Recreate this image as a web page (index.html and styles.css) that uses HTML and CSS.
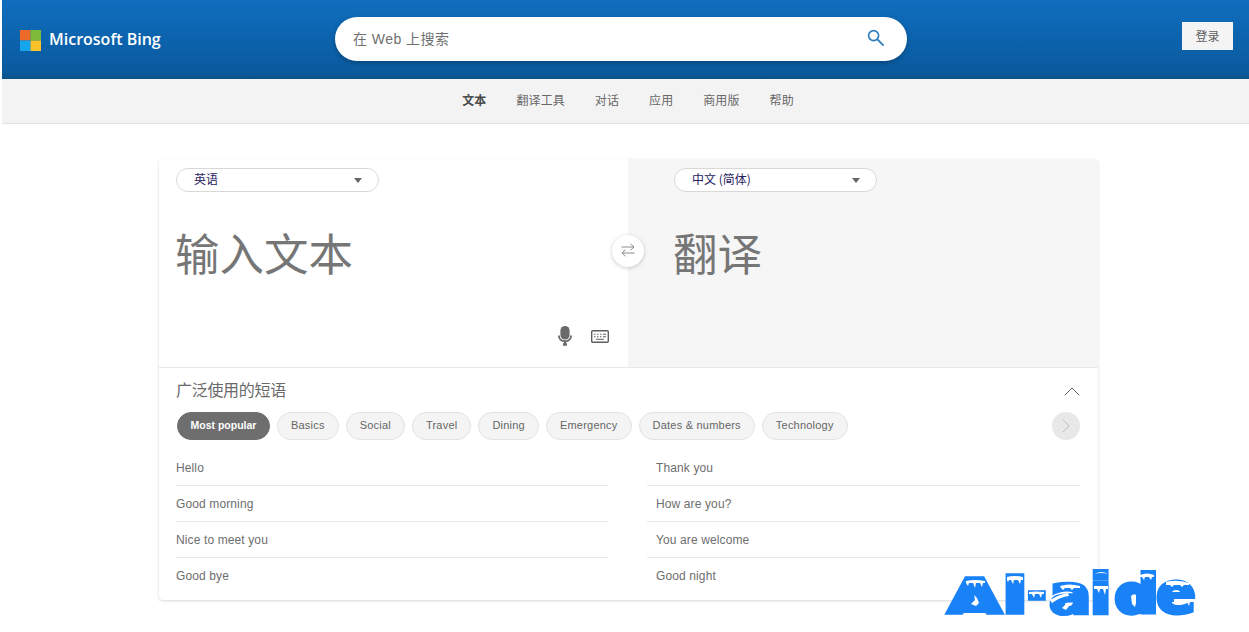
FILE: index.html
```html
<!DOCTYPE html>
<html lang="zh-CN">
<head>
<meta charset="utf-8">
<title>Microsoft Bing 翻译</title>
<link rel="stylesheet" href="styles.css">
</head>
<body>
<div class="page">
  <header class="topbar">
    <div class="brand">
      <svg class="ms-logo" viewBox="0 0 21 21" aria-hidden="true">
        <rect width="10.5" height="10.5" fill="#ee6a2a"/>
        <rect x="10.5" width="10.5" height="10.5" fill="#7fba3a"/>
        <rect y="10.5" width="10.5" height="10.5" fill="#16a6ee"/>
        <rect x="10.5" y="10.5" width="10.5" height="10.5" fill="#fcc22a"/>
      </svg>
      <span class="brand-name">Microsoft Bing</span>
    </div>
    <div class="search">
      <span class="search-text">在 Web 上搜索</span>
      <svg class="search-icon" viewBox="0 0 18 18" aria-hidden="true">
        <circle cx="6.6" cy="6.6" r="5" fill="none" stroke="#2f7fbd" stroke-width="1.7"/>
        <path d="M10.4 10.4 L16.6 16.6" stroke="#2f7fbd" stroke-width="1.9" fill="none"/>
      </svg>
    </div>
    <button class="login">登录</button>
  </header>
  <nav class="tabs">
    <span class="tab tab-active">文本</span>
    <span class="tab">翻译工具</span>
    <span class="tab">对话</span>
    <span class="tab">应用</span>
    <span class="tab">商用版</span>
    <span class="tab">帮助</span>
  </nav>
  <main class="card">
    <section class="panes">
      <div class="pane pane-in">
        <div class="lang"><span>英语</span><i class="caret"></i></div>
        <div class="big-text">输入文本</div>
        <div class="tools">
          <svg class="mic" viewBox="0 0 14 20" aria-hidden="true">
            <rect x="2.4" y="0" width="9.2" height="13.5" rx="4.6" fill="#6a6a6a"/>
            <path d="M0.9 9.5 C1 13.5 3.8 15.2 7 15.2 C10.2 15.2 13 13.5 13.1 9.5" fill="none" stroke="#6a6a6a" stroke-width="1.8"/>
            <path d="M7 15 V18 M5 18.5 H9" stroke="#6a6a6a" stroke-width="2.4" fill="none"/>
          </svg>
          <svg class="kbd" viewBox="0 0 18 13" aria-hidden="true">
            <rect x="0.7" y="0.7" width="16.6" height="11.6" rx="1" fill="none" stroke="#5f5f5f" stroke-width="1.4"/>
            <path d="M3 4.2 H4.5 M6 4.2 H7.5 M9 4.2 H10.5 M12 4.2 H15 M3 6.7 H4.5 M6 6.7 H7.5 M9 6.7 H10.5 M12 6.7 H15 M5 9.3 H13" stroke="#5f5f5f" stroke-width="1.1" fill="none"/>
          </svg>
        </div>
      </div>
      <div class="pane pane-out">
        <div class="lang"><span>中文 (简体)</span><i class="caret"></i></div>
        <div class="big-text">翻译</div>
      </div>
      <button class="swap" aria-label="swap">
        <svg viewBox="0 0 16 14" aria-hidden="true">
          <path d="M1.5 4 H14 M10.5 0.8 L14 4 L10.5 7.2 M14.5 10 H2 M5.5 6.8 L2 10 L5.5 13.2" fill="none" stroke="#8a8a8a" stroke-width="1"/>
        </svg>
      </button>
    </section>
    <section class="phrases">
      <div class="phrases-head">
        <h2 class="phrases-title">广泛使用的短语</h2>
        <svg class="collapse" viewBox="0 0 16 9" aria-hidden="true"><path d="M0.7 8.3 L8 1 L15.3 8.3" fill="none" stroke="#666" stroke-width="1"/></svg>
      </div>
      <div class="chips-row">
        <div class="chips">
          <span class="chip chip-active">Most popular</span>
          <span class="chip">Basics</span>
          <span class="chip">Social</span>
          <span class="chip">Travel</span>
          <span class="chip">Dining</span>
          <span class="chip">Emergency</span>
          <span class="chip">Dates &amp; numbers</span>
          <span class="chip">Technology</span>
        </div>
        <span class="next">
          <svg viewBox="0 0 8 14" aria-hidden="true"><path d="M1 1 L7 7 L1 13" fill="none" stroke="#bdbdbd" stroke-width="1"/></svg>
        </span>
      </div>
      <div class="lists">
        <ul class="list list-left">
          <li>Hello</li>
          <li>Good morning</li>
          <li>Nice to meet you</li>
          <li>Good bye</li>
        </ul>
        <ul class="list list-right">
          <li>Thank you</li>
          <li>How are you?</li>
          <li>You are welcome</li>
          <li>Good night</li>
        </ul>
      </div>
    </section>
  </main>
  <svg class="watermark" viewBox="0 0 252 50" aria-label="AI-aide">
    <path class="wm-fill" d="M35 14 L24 14 L6 46 L58 46Z"/>
    <path class="wm-fill" d="M178 24 H205 V44 H178Z"/>
    <g class="wm-text">
      <text transform="translate(3.5 46) scale(1.4 .97)">A</text>
      <text transform="translate(57.5 45.5) scale(1.45 1.02)">I</text>
      <text transform="translate(83 43) scale(.95 1)">-</text>
      <text transform="translate(105 45.5) scale(1.26 1.05)">a</text>
      <text transform="translate(145.4 45.5) scale(1.3 1.12)">i</text>
      <text transform="translate(170 45.5) scale(1.26 1.08)">d</text>
      <text transform="translate(212 45) scale(1.18 1.12)">e</text>
    </g>
    <g class="wm-snow">
      <path d="M22 14 Q31 12 41 14 L41 16 L39 16 L38 20 L36 16 L32 16 L31 21 L29 16 L25 16 L24 19 L22 16Z"/>
      <path d="M63 10 Q70 8 79 10 L79 13 L77 13 L76 17 L74 13 L70 13 L69 17 L67 13 L65 13 L64 15 L63 13Z"/>
      <path d="M85 25 Q92 24 100 25 L100 27 L98 27 L97 31 L95 27 L91 27 L90 31 L88 27 L85 27Z"/>
      <path d="M116 19 Q125 16 136 19 L136 21 L130 21 L128 23 L126 21 L121 21 L119 23 L117 21Z"/>
      <path d="M106 33 Q116 27 124 26 L125 29 Q116 30 108 36Z"/>
      <path d="M151 7 Q157 3 164 7 Q157 5 151 7Z"/>
      <path d="M150 19 H164 V22 L162 22 L161 28 L159 22 L156 22 L155 26 L153 22 L150 22Z"/>
      <path d="M196 8 Q203 5 210 8 L210 10 L208 10 L207 13 L205 10 L201 10 L200 13 L198 10 L196 10Z"/>
      <path d="M222 15 Q232 12 245 16 L245 18 L240 18 L238 20 L236 18 L230 18 L228 20 L226 18 L222 18Z"/>
      <path d="M230 32 H252 V35 L246 35 L245 39 L243 35 L238 35 L237 38 L235 35 L230 35Z"/>
      <path d="M27 37 L31 33 L30 28 L33 31 L35 36 L32 39Z"/>
      <path d="M118 41 L122 37 L125 39 L122 43Z"/>
      <path d="M187 29 Q190 26 192 28 L192 36 L191 40 L188 37Z"/>
    </g>
  </svg>
</div>
</body>
</html>
```
FILE: styles.css
```css
* { box-sizing: border-box; }
html, body { margin: 0; padding: 0; background: #fff; overflow: hidden; height: 632px; }
body { font-family: "Liberation Sans", "Noto Sans CJK SC", sans-serif; color: #5f5f5f; }
.page { position: relative; margin-left: 2px; height: 632px; }

.topbar {
  height: 79px; display: flex; align-items: flex-start;
  background: linear-gradient(180deg, #106ebe 0%, #0c63ad 50%, #0a5a9e 92%, #0a5287 100%);
}
.brand { display: flex; align-items: center; margin: 30px 0 0 18px; width: 315px; height: 21px; }
.ms-logo { width: 21px; height: 21px; flex: none; }
.brand-name { margin: -2px 0 0 8px; font: 600 16px/21px "Open Sans", sans-serif; color: #fff; white-space: nowrap; }
.search {
  margin-top: 17px; width: 572px; height: 44px; border-radius: 22px; background: #fff;
  display: flex; align-items: center; justify-content: space-between; padding: 0 22px 0 18px;
  box-shadow: 0 2px 5px rgba(0,0,0,.25);
}
.search-text { font: 14px/20px "Liberation Sans", "Noto Sans CJK SC", sans-serif; color: #707070; margin-top: -1px; letter-spacing: .45px; }
.search-icon { width: 18px; height: 18px; margin: -2px 0 0; }
.login {
  margin: 22px 0 0 275px; width: 51px; height: 28px; border: 0; padding: 0 0 2px; background: #f4f4f4;
  font: 12px "Noto Sans CJK SC", sans-serif; color: #5f5f5f;
}

.tabs {
  height: 45px; display: flex; justify-content: center; align-items: center; gap: 30px;
  padding: 0 0 3px 5px; background: #f4f3f3; border-bottom: 1px solid #e2e2e2;
  font: 12px "Noto Sans CJK SC", sans-serif; color: #686868; letter-spacing: .1px;
}
.tab-active { font-weight: 700; color: #4a4a4a; }

.card {
  margin: 35px 0 0 157px; width: 939px; height: 441px; background: #fff;
  border-radius: 4px; box-shadow: 0 1px 3px rgba(0,0,0,.16); overflow: hidden;
}
.panes { position: relative; display: flex; height: 209px; border-bottom: 1px solid #e8e8e8; }
.pane { position: relative; flex: none; height: 208px; }
.pane-in { width: 469px; padding: 9px 0 0 17px; }
.pane-out { width: 470px; padding: 9px 0 0 46px; background: #f6f6f7; }
.lang {
  width: 203px; height: 24px; border: 1px solid #d8d8d8; border-radius: 12px; background: #fff;
  display: flex; align-items: center; justify-content: space-between; padding: 0 16px 2px 17px;
  font: 12px/20px "Noto Sans CJK SC", sans-serif; color: #262060;
}
.caret { width: 0; height: 0; margin-top: 2px; border: 4.5px solid transparent; border-top: 5px solid #666; border-bottom: 0; }
.big-text { margin: 28px 0 0 -1px; font: 44.5px/64px "Noto Sans CJK SC", sans-serif; color: #767676; }
.tools { position: absolute; right: 19px; bottom: 21px; display: flex; align-items: center; gap: 19px; }
.mic { width: 14px; height: 20px; }
.kbd { width: 18px; height: 13px; }
.swap {
  position: absolute; left: 453px; top: 76px; width: 32px; height: 32px; padding: 8px; border: 0;
  border-radius: 50%; background: #fff; box-shadow: 0 1px 4px rgba(0,0,0,.2); display: flex;
}
.swap svg { width: 16px; height: 14px; }

.phrases { padding: 0 18px 0 17px; }
.phrases-head { display: flex; justify-content: space-between; align-items: center; height: 44px; }
.phrases-title { margin: -2px 0 0; font: 400 16px/24px "Noto Sans CJK SC", sans-serif; color: #6a6a6a; letter-spacing: -.3px; }
.collapse { width: 16px; height: 9px; margin-top: 3px; }
.chips-row { display: flex; justify-content: space-between; height: 28px; }
.chips { display: flex; gap: 7px; }
.chip {
  height: 28px; padding: 0 13px; border: 1px solid #e2e2e2; border-radius: 14px; background: #f4f4f4;
  font: 11px/25px "Liberation Sans", sans-serif; letter-spacing: .22px; color: #666; white-space: nowrap;
}
.chip-active {
  margin-left: 1px; padding: 0 12.5px; background: #6e6e6e; border-color: #6e6e6e; color: #fff;
  font-size: 10.5px; font-weight: 700; letter-spacing: 0;
}
.next {
  width: 28px; height: 28px; border-radius: 50%; background: #e8e8e8;
  display: flex; align-items: center; justify-content: center;
}
.next svg { width: 8px; height: 14px; }
.lists { display: flex; justify-content: space-between; margin-top: 10px; }
.list { list-style: none; margin: 0; padding: 0; width: 432px; }
.list-right { width: 433px; }
.list li {
  height: 36px; border-bottom: 1px solid #e8e8e8;
  font: 12px/37px "Liberation Sans", sans-serif; letter-spacing: .12px; color: #6e6e6e;
}
.list li:last-child { border-bottom: 0; }
.list-right li { padding-left: 9px; }

.watermark { position: absolute; left: 942px; top: 567px; width: 252px; height: 50px; overflow: visible; }
.wm-fill { fill: #1a82f7; }
.wm-text { font: 700 50px "DejaVu Sans", sans-serif; fill: #1a82f7; stroke: #1a82f7; stroke-width: 3.5px; }
.wm-snow { fill: #fff; }
```
